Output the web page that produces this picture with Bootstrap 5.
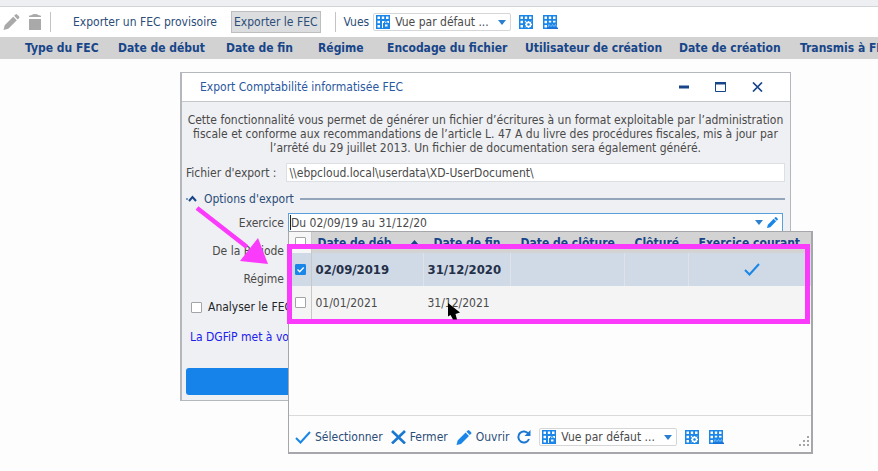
<!DOCTYPE html>
<html lang="fr">
<head>
<meta charset="utf-8">
<meta name="viewport" content="width=device-width, initial-scale=1">
<title>Export Comptabilité informatisée FEC</title>
<link href="https://cdn.jsdelivr.net/npm/bootstrap@5.3.0/dist/css/bootstrap.min.css" rel="stylesheet">
<style>
:root{--ui-navy:#174589;--ui-blue:#1a86e8;--ui-line:#b4b7bb;--ui-panel:#eff0f3;--ui-text:#4a4a4a}
body{font-family:"DejaVu Sans Condensed","DejaVu Sans",sans-serif;font-size:12px;line-height:14px;color:var(--ui-text);background:#fdfdfd;min-height:100vh;overflow:hidden}
svg{display:block;flex:none}
button,select,input{font:inherit;color:inherit}
.ink{color:#2b4d78}
.top-strip{height:7px;background:#eeeff2;border-bottom:1px solid #d3d4d6}
.toolbar{height:30px;background:#fff;padding-left:3px}
.tool-group{gap:14px;margin-left:22px}
.icon-group{gap:10px;margin-left:8px}
.plain-btn{border:0;background:none;padding:0;white-space:nowrap;color:#2b4d78}
.sky,.plain-btn.sky{color:var(--ui-blue)}
.tool-on{border:1px solid #bdbec0;background:#dcdddf;height:22px;padding:0 2px}
.v-sep{width:1px;height:20px;background:#c4c4c4}
.view-box{border:1px solid #d4d6d8;border-radius:2px;height:18px;background:#fff;width:138px;padding:0 4px 0 2px}
.view-box select{appearance:none;border:0;background:none;padding:0;outline:0;line-height:14px;min-width:0}
.view-icon{margin-right:5px}
.grid-head{table-layout:fixed;width:100%;background:#d2d2d2;height:22px}
.grid-head th{padding:0;white-space:nowrap;color:var(--ui-navy)}
.g0{width:25px}.g1{width:93px}.g2{width:108px}.g3{width:92px}.g4{width:69px}.g5{width:138px}.g6{width:154px}.g7{width:121px}
.desk{position:relative}
.win{position:absolute;left:180px;top:13px;width:611px;background:var(--ui-panel);border:1px solid var(--ui-line);border-left-width:2px}
.win-bar{background:#fff;height:29px;border-bottom:1px solid #c4c6ca;padding:0 27px 0 18px;color:#2a57a0}
.win-btns{gap:26px}
.win-body{padding:11px 5px 5px 4px}
.path-lab{margin-right:10px}
.path-in{height:19px;border:1px solid #dcdfe3;background:#fff;padding:0 2px;outline:0;min-width:0}
.opt-row{margin-top:10px;gap:6px}
.exo-row{margin-top:7px}
.next-row{margin-top:14px}
.rule{height:2px;background:#93a5bb}
.lab{width:98px;text-align:right}
.combo{height:19px;border:1px solid #5b9fdc;background:#fff;position:relative;margin-right:2px}
.combo>input{border:0;padding:0;background:none;outline:0;min-width:0}
.text-caret{width:1px;height:15px;background:#222;margin-left:1px}
.tick{appearance:none;width:11px;height:11px;border:1px solid #a2a4a6;background:#fff;margin:0;display:block;border-radius:1px}
.tick:checked{border-color:var(--ui-blue);background:var(--ui-blue) url("data:image/svg+xml,%3Csvg xmlns='http://www.w3.org/2000/svg' viewBox='0 0 9 9'%3E%3Cpath d='M1.5 4.5l2.2 2.2 4-4.2' fill='none' stroke='white' stroke-width='1.3'/%3E%3C/svg%3E")}
.check-row{gap:6px;padding-left:5px}
.info-link{color:#2020ee}
.go-btn{height:27px;background:#1683ea;border:0;border-radius:3px}
.pop{position:absolute;left:-1px;top:17px;width:525px;background:#fdfdfd;border:1px solid #a5a7aa;border-bottom-width:2px;border-right-width:2px;z-index:3}
.pop-list{height:184px;border-bottom:1px solid #dadada}
.pop table{width:100%;table-layout:fixed}
.pop th,.pop td{padding:0 0 0 4px;white-space:nowrap;height:33px;border-right:1px solid #dfe3e9}
.pop th{height:21px;background:#d3d3d3;color:var(--ui-navy);padding-left:6px;border-color:#d3d3d3}
.pop .pad-more{padding-left:10px}
.pop tr>*:last-child{border-right:0}
.row-on td{background:#d0d9e6;font-weight:700;font-size:13px;color:#243048}
.pop .row-off td{background:#f4f4f5;border-color:#f4f4f5}
.pop tr>*:first-child{padding-left:6px;border-color:#c8c8c8}
.pop th:first-child{background:#f6f6f7}
.pop .row-off td:first-child{border-color:#c8c8c8}
.c0{width:22px}.c1{width:112px}.c2{width:87px}.c3{width:114px}.c4{width:64px}
.pop-foot{height:36px;padding:12px 1px 0 6px}
.hl-box{position:absolute;left:287px;top:185px;width:523px;height:80px;border:5px solid #fb3bfb;z-index:4}
.hl-arrow{position:absolute;left:190px;top:142px;z-index:5}
.pointer{position:absolute;left:447px;top:244px;z-index:5}
</style>
<script src="https://cdn.jsdelivr.net/npm/bootstrap@5.3.0/dist/js/bootstrap.bundle.min.js"></script>
</head>
<body>
<svg width="0" height="0" class="position-absolute" aria-hidden="true">
  <symbol id="i-grid" viewBox="0 0 14 14"><path fill="#1a86e8" d="M0 0h14v14H0z"/><path fill="#fff" d="M1.500 1.500H4V4H1.500zM5.800 1.500h2.400V4H5.800zM10 1.500h2.500V4H10zM1.500 5.800H4v2.400H1.500zM1.500 10H4v2.500H1.500z"/></symbol>
  <symbol id="i-grid-view" viewBox="0 0 14 14"><use href="#i-grid" width="14" height="14"/><path fill="#fff" d="M6 6h7v7H6z"/><path fill="#1a86e8" d="M7 8h6v5H7z"/><path fill="#fff" d="M9 9.500h2.500v2H9z"/><path d="M8.500 8V6.800h2.500V8" fill="none" stroke="#1a86e8"/></symbol>
  <symbol id="i-grid-gear" viewBox="0 0 14 14"><use href="#i-grid" width="14" height="14"/><path fill="#fff" d="M5.800 5.800h1.400v1.400H5.800zM11.800 5.800h.7v.7h-.7zM5.800 11.800h.7v.7h-.7z"/><circle cx="9.500" cy="9.500" r="2.200" fill="none" stroke="#fff" stroke-width="1.700"/><path d="M9.500 6v1M9.500 12v1M6 9.500h1M12 9.500h1M7.200 7.200l.6.6M11.800 7.200l-.6.6M7.200 11.800l.6-.6M11.800 11.800l-.6-.6" stroke="#fff" stroke-width="1.200"/></symbol>
  <symbol id="i-grid-edit" viewBox="0 0 15 14"><use href="#i-grid" width="14" height="14"/><path fill="#fff" d="M5.800 5.800h2.400v1.700H5.800zM10 5.800h2.500v1.700H10z"/><path d="M5 12l1-2.500 2 2 1.500-2 1.500 2 1.500-2 1 2" fill="none" stroke="#9fd0ff" stroke-width=".7"/><path fill="#1a6fd0" d="M4 12.500h11V14H4z"/></symbol>
  <symbol id="i-pen" viewBox="0 0 16 16"><path fill="currentColor" d="M0 16l1.200-4.800L9.700 2.700l3.600 3.600-8.500 8.500zM10.600 1.800L12 .4q.8-.7 1.600 0l2 2q.7.800 0 1.600l-1.400 1.400z"/></symbol>
  <symbol id="i-down" viewBox="0 0 8 5"><path fill="#2b7fd0" d="M0 0h8L4 5z"/></symbol>
  <symbol id="i-check" viewBox="0 0 16 13"><path d="M1 7l4.500 4.500L15 1" fill="none" stroke="currentColor" stroke-width="2"/></symbol>
</svg>

<div class="top-strip"></div>
<nav class="toolbar d-flex align-items-center">
  <button class="plain-btn me-2" aria-label="Modifier"><svg width="17" height="16" style="color:#a9a9a9"><use href="#i-pen"/></svg></button>
  <button class="plain-btn" aria-label="Supprimer"><svg width="14" height="16" viewBox="0 0 14 16"><path fill="#a9a9a9" d="M1 2.500Q1 1 4 1q0-1 3-1t3 1q3 0 3 1.500V3H1zM1 5h12v11H1z"/></svg></button>
  <span class="v-sep ms-2"></span>
  <div class="tool-group d-flex align-items-center">
    <button class="plain-btn">Exporter un FEC provisoire</button>
    <button class="plain-btn tool-on">Exporter le FEC</button>
    <span class="v-sep"></span>
  </div>
  <label for="view-top" class="ink text-nowrap ms-2 me-1">Vues</label>
  <span class="view-box d-flex align-items-center">
    <svg width="14" height="14" class="view-icon"><use href="#i-grid-view"/></svg>
    <select id="view-top" class="flex-grow-1"><option>Vue par défaut ...</option></select>
    <svg width="8" height="5"><use href="#i-down"/></svg>
  </span>
  <div class="icon-group d-flex">
    <button class="plain-btn" aria-label="Configurer la vue"><svg width="14" height="14"><use href="#i-grid-gear"/></svg></button>
    <button class="plain-btn" aria-label="Modifier la vue"><svg width="15" height="14"><use href="#i-grid-edit"/></svg></button>
  </div>
</nav>

<table class="grid-head">
  <colgroup><col class="g0"><col class="g1"><col class="g2"><col class="g3"><col class="g4"><col class="g5"><col class="g6"><col class="g7"><col></colgroup>
  <thead><tr><td></td><th>Type du FEC</th><th>Date de début</th><th>Date de fin</th><th>Régime</th><th>Encodage du fichier</th><th>Utilisateur de création</th><th>Date de création</th><th>Transmis à FEC</th></tr></thead>
</table>

<main class="desk">
  <section class="win" aria-label="Export">
    <header class="win-bar d-flex align-items-center justify-content-between">
      <span>Export Comptabilité informatisée FEC</span>
      <span class="win-btns d-flex">
        <button class="plain-btn" aria-label="Réduire"><svg width="10" height="10"><path d="M0 3.500h10v3H0z" fill="#174589"/></svg></button>
        <button class="plain-btn" aria-label="Agrandir"><svg width="11" height="10"><path d="M.5 1h10v8.500H.5z" fill="#fff" stroke="#174589"/><path d="M0 0h11v2.500H0z" fill="#174589"/></svg></button>
        <button class="plain-btn" aria-label="Fermer la fenêtre"><svg width="11" height="10"><path d="M1 .5l9 9M10 .5l-9 9" stroke="#174589" stroke-width="1.700"/></svg></button>
      </span>
    </header>
    <div class="win-body">
      <p class="text-center text-nowrap mb-0">Cette fonctionnalité vous permet de générer un fichier d’écritures à un format exploitable par l’administration<br>fiscale et conforme aux recommandations de l’article L. 47 A du livre des procédures fiscales, mis à jour par<br>l’arrêté du 29 juillet 2013. Un fichier de documentation sera également généré.</p>
      <div class="d-flex align-items-center mt-2">
        <label for="path" class="path-lab text-nowrap">Fichier d'export :</label>
        <input id="path" class="path-in flex-grow-1" value="\\ebpcloud.local\userdata\XD-UserDocument\">
      </div>
      <div class="opt-row ink d-flex align-items-center">
        <svg width="12" height="10" viewBox="0 0 12 10"><path d="M0 5h2" stroke="#174589"/><path d="M3 7l3.500-4L10 7" fill="none" stroke="#174589" stroke-width="2"/></svg>
        <span class="text-nowrap">Options d'export</span><span class="rule flex-grow-1"></span>
      </div>
      <div class="exo-row d-flex align-items-center">
        <label for="exo" class="lab me-1">Exercice</label>
        <div class="combo flex-grow-1 d-flex align-items-center">
          <span class="text-caret"></span><input id="exo" class="flex-grow-1" value="Du 02/09/19 au 31/12/20">
          <button class="plain-btn me-1" aria-label="Dérouler"><svg width="8" height="5"><use href="#i-down"/></svg></button>
          <button class="plain-btn sky me-1" aria-label="Modifier l'exercice"><svg width="11" height="11"><use href="#i-pen"/></svg></button>
          <div class="pop">
            <div class="pop-list">
              <table>
                <colgroup><col class="c0"><col class="c1"><col class="c2"><col class="c3"><col class="c4"><col></colgroup>
                <thead><tr><th><input type="checkbox" class="tick" aria-label="Tout sélectionner"></th>
                  <th><span class="d-flex align-items-center justify-content-between pe-1">Date de déb... <svg width="9" height="5"><path d="M0 5L4.500 0 9 5z" fill="#174589"/></svg></span></th>
                  <th class="pad-more">Date de fin</th><th class="pad-more">Date de clôture</th><th class="pad-more">Clôturé</th><th class="pad-more">Exercice courant</th></tr></thead>
                <tbody>
                  <tr class="row-on"><td><input type="checkbox" class="tick" checked aria-label="02/09/2019"></td><td>02/09/2019</td><td>31/12/2020</td><td></td><td></td><td><svg width="16" height="13" class="sky mx-auto"><use href="#i-check"/></svg></td></tr>
                  <tr class="row-off"><td><input type="checkbox" class="tick" aria-label="01/01/2021"></td><td>01/01/2021</td><td>31/12/2021</td><td></td><td></td><td></td></tr>
                </tbody>
              </table>
            </div>
            <div class="pop-foot d-flex align-items-start">
              <div class="d-flex align-items-center flex-grow-1">
                <button class="plain-btn d-flex align-items-center gap-1"><svg width="16" height="13" class="sky"><use href="#i-check"/></svg>Sélectionner</button>
                <button class="plain-btn d-flex align-items-center gap-1 ms-2"><svg width="15" height="14"><path d="M1 1l13 12.500M14 1L1 13.500" stroke="#1a78d0" stroke-width="2.600"/></svg>Fermer</button>
                <button class="plain-btn d-flex align-items-center gap-1 ms-2"><svg width="16" height="15" class="sky"><use href="#i-pen"/></svg>Ouvrir</button>
                <button class="plain-btn ms-2" aria-label="Actualiser"><svg width="14" height="14" viewBox="0 0 14 14"><path d="M11.500 4A5.500 5.500 0 1 0 12 9" fill="none" stroke="#1a78d0" stroke-width="2"/><path d="M13.500 0v6h-6z" fill="#1a78d0"/></svg></button>
                <span class="view-box d-flex align-items-center ms-2">
                  <svg width="14" height="14" class="view-icon"><use href="#i-grid-view"/></svg>
                  <select class="flex-grow-1" aria-label="Vue"><option>Vue par défaut ...</option></select>
                  <svg width="8" height="5"><use href="#i-down"/></svg>
                </span>
                <div class="icon-group d-flex">
                  <button class="plain-btn" aria-label="Configurer"><svg width="14" height="14"><use href="#i-grid-gear"/></svg></button>
                  <button class="plain-btn" aria-label="Personnaliser"><svg width="15" height="14"><use href="#i-grid-edit"/></svg></button>
                </div>
              </div>
              <svg width="12" height="12" class="mt-2"><path fill="#a6a6a6" d="M9 0h2v2H9zM5 4h2v2H5zM9 4h2v2H9zM1 8h2v2H1zM5 8h2v2H5zM9 8h2v2H9z"/></svg>
            </div>
          </div>
        </div>
      </div>
      <div class="d-flex mt-2 pt-1"><span class="lab">De la Période</span></div>
      <div class="next-row d-flex"><span class="lab">Régime</span></div>
      <div class="next-row check-row d-flex align-items-center text-dark"><input type="checkbox" class="tick" id="ana"><label for="ana">Analyser le FEC</label></div>
      <div class="mt-3 ps-1"><a href="#" class="info-link text-decoration-none">La DGFiP met à vo</a></div>
      <button class="go-btn w-100 d-block mt-4" aria-label="Exporter"></button>
    </div>
  </section>
  <div class="hl-box"></div>
  <svg class="hl-arrow" width="82" height="66" viewBox="0 0 82 66"><path d="M7 7l50 39" stroke="#fb3bfb" stroke-width="4.500"/><path fill="#fb3bfb" d="M78 63L68 37 50 60z"/></svg>
  <svg class="pointer" width="14" height="17" viewBox="0 0 14 17"><path d="M1 0v13.500l2.500-1.500L6 16.500h4L8.500 11 13 9.500z" fill="#000"/></svg>
</main>
</body>
</html>
